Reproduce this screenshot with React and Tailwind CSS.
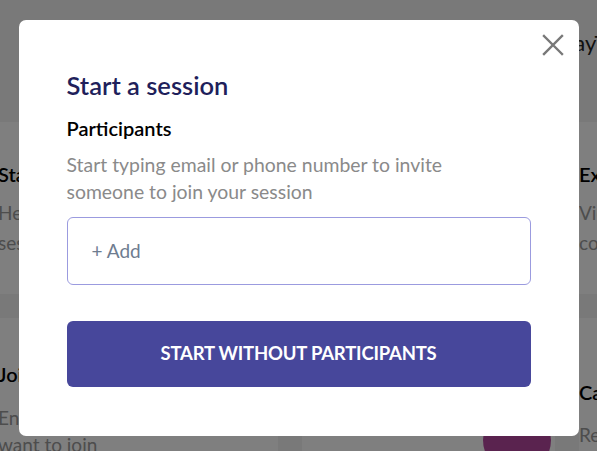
import React from 'react';

function CloseIcon() {
  return (
    <svg width="24" height="24" viewBox="0 0 24 24" fill="none" stroke="currentColor" strokeWidth="2.4" strokeLinecap="square">
      <path d="M3 3L21 21M21 3L3 21" />
    </svg>
  );
}

export default function App() {
  return (
    <div className="relative w-[597px] h-[451px] overflow-hidden bg-[#f2f2f2] font-['Lato',sans-serif]">
      {/* page behind the modal */}
      <div className="h-[122px] pt-[26px] pl-[556px] whitespace-nowrap">
        <span className="text-[22px] text-[#222]">PlayTime</span>
      </div>
      <div className="grid grid-cols-[280px_253px_300px] gap-x-[24px] gap-y-[24px] -ml-[2px] w-[900px] whitespace-nowrap">
        <div className="h-[172px] bg-white pt-[38px]">
          <h3 className="text-[20px] font-semibold text-black leading-[28px]">Start a session</h3>
          <p className="mt-[10px] text-[19px] leading-[30px] text-[#9a9a9a]">Help someone by starting a<br />session</p>
        </div>
        <div className="h-[172px] bg-white" />
        <div className="h-[172px] bg-white pt-[38px]">
          <h3 className="text-[20px] font-semibold text-black leading-[28px]">Explore</h3>
          <p className="mt-[10px] text-[19px] leading-[30px] text-[#9a9a9a]">View the library of<br />content</p>
        </div>
        <div className="h-[140px] bg-white pt-[42px]">
          <h3 className="text-[20px] font-semibold text-black leading-[28px]">Join a session</h3>
          <p className="mt-[16px] text-[19px] leading-[27px] text-[#9a9a9a]">Enter the code of the session you<br />want to join</p>
        </div>
        <div className="h-[140px] bg-white flex justify-end pr-[4px] pt-[88px]">
          <div className="w-[68px] h-[68px] rounded-full bg-[#b4479f] shrink-0" />
        </div>
        <div className="h-[140px] bg-white pt-[60px]">
          <h3 className="text-[20px] font-semibold text-black leading-[28px]">Calendar</h3>
          <p className="mt-[14px] text-[19px] leading-[30px] text-[#9a9a9a]">Review upcoming sessions</p>
        </div>
      </div>

      {/* overlay */}
      <div className="absolute inset-0 bg-black/50 flex items-start justify-center pt-[20px]">
        <div className="relative w-[560px] h-[416px] bg-white rounded-[7px] px-[48px] pt-[49px]">
          <button className="absolute right-[14px] top-[13px] text-[#787878]">
            <CloseIcon />
          </button>
          <h2 className="text-[25.5px] leading-[32px] font-semibold text-[#1f1f5b]">Start a session</h2>
          <h4 className="mt-[14px] text-[20px] leading-[26px] font-semibold text-black">Participants</h4>
          <p className="mt-[10px] max-w-[430px] text-[19.4px] leading-[27px] text-[#8a8a8a]">
            Start typing email or phone number to invite someone to join your session
          </p>
          <div className="mt-[12px] h-[68px] rounded-[6px] border border-[#9b9bdf] flex items-center px-[24px]">
            <span className="text-[19px] text-[#6e7c90]">+ Add</span>
          </div>
          <button className="mt-[36px] w-full h-[66px] rounded-[6px] bg-[#47479b] text-white text-[18.5px] font-bold tracking-[-0.2px]">
            START WITHOUT PARTICIPANTS
          </button>
        </div>
      </div>
    </div>
  );
}
